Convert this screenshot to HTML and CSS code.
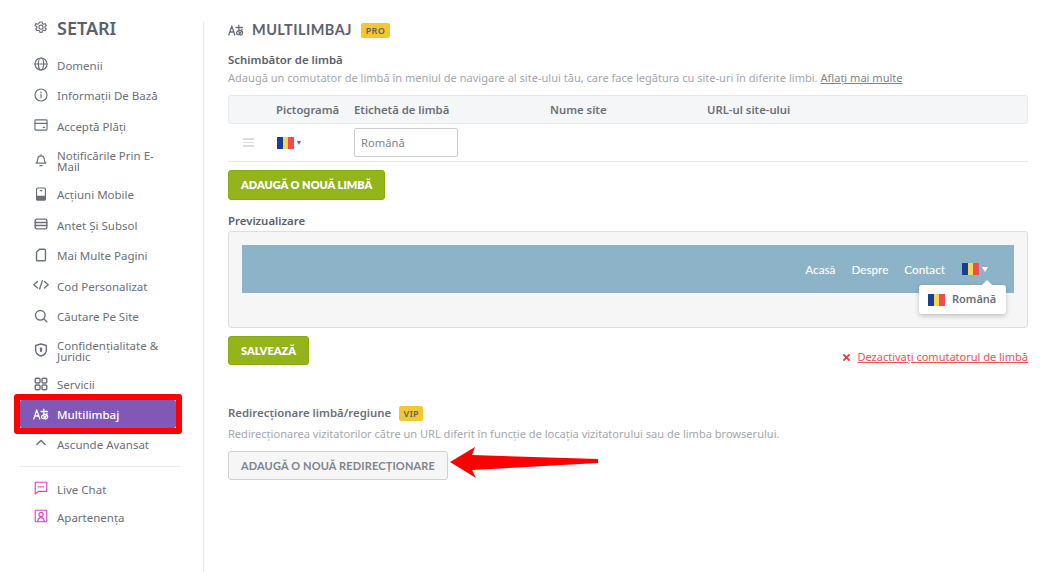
FILE: index.html
```html
<!DOCTYPE html>
<html lang="ro">
<head>
<meta charset="utf-8">
<title>Setari</title>
<link rel="stylesheet" href="styles.css">
</head>
<body>
<div class="page">
  <aside class="sidebar">
    <h2 class="side-title">
      <svg class="ico" viewBox="-1 -1 18 18"><path d="M6.800 1.200h2.400l.5 1.900 1.100.6 1.900-.6 1.200 2.100-1.400 1.300v1.200l1.400 1.300-1.200 2.100-1.900-.6-1.100.6-.5 1.900H6.800l-.5-1.900-1.100-.6-1.900.6-1.200-2.100 1.400-1.300V6.500L1.100 5.200l1.200-2.100 1.900.6 1.100-.6z"/><circle cx="8" cy="7.100" r="2.300"/></svg>
      <span>SETARI</span>
    </h2>
    <nav class="menu">
      <a class="item"><svg class="ico" viewBox="-1 -1 18 18"><circle cx="8" cy="8" r="6.800"/><ellipse cx="8" cy="8" rx="3" ry="6.800"/><path d="M1.200 8h13.600"/></svg><span>Domenii</span></a>
      <a class="item"><svg class="ico" viewBox="-1 -1 18 18"><circle cx="8" cy="8" r="6.800"/><path d="M8 7.500v3.600M8 4.600v1.200"/></svg><span>Informații De Bază</span></a>
      <a class="item"><svg class="ico" viewBox="-1 -1 18 18"><rect x="1.200" y="2.200" width="13.600" height="11.600" rx="1"/><path d="M1.200 6.200h13.600M10.400 10.600h1.800"/></svg><span>Acceptă Plăți</span></a>
      <a class="item item-double"><svg class="ico" viewBox="-1 -1 18 18"><path d="M2.500 11.600h11c-1.200-1-1.600-2-1.700-3.800C11.700 5.200 10.200 3.400 8 3.400S4.300 5.200 4.200 7.800c-.1 1.800-.5 2.800-1.700 3.800zM8 1.900v1.500M6.800 14.400h2.400"/></svg><span>Notificările Prin E-Mail</span></a>
      <a class="item"><svg class="ico" viewBox="-1 -1 18 18"><rect x="3" y="1.200" width="10" height="13.600" rx="1.500"/><path d="M3 10.600h10v3c0 .7-.5 1.200-1.200 1.200H4.200c-.7 0-1.200-.5-1.200-1.200z" fill="#6b7079"/><path d="M7 4.200h2"/></svg><span>Acțiuni Mobile</span></a>
      <a class="item"><svg class="ico ico-thick" viewBox="-1 -1 18 18"><rect x="1.500" y="2.500" width="13" height="11" rx="1.500"/><path d="M1.500 6.300h13M1.500 9.700h13"/></svg><span>Antet Și Subsol</span></a>
      <a class="item"><svg class="ico ico-thick" viewBox="-1 -1 18 18"><path d="M6.200 1.500h5.600c.7 0 1.200.5 1.200 1.200v10.600c0 .7-.5 1.200-1.200 1.200H4.200c-.7 0-1.200-.5-1.200-1.200V4.700z"/></svg><span>Mai Multe Pagini</span></a>
      <a class="item"><svg class="ico" viewBox="0 0 16 16"><path d="M4.500 4.500 .8 7.800l3.700 3.300M11.500 4.500l3.700 3.300-3.700 3.300M9.400 3.500 6.600 12"/></svg><span>Cod Personalizat</span></a>
      <a class="item"><svg class="ico ico-thick" viewBox="-1 -1 18 18"><circle cx="7.200" cy="7.200" r="5.400"/><path d="m11 11 3.600 3.600"/></svg><span>Căutare Pe Site</span></a>
      <a class="item item-double"><svg class="ico ico-thick" viewBox="-1 -1 18 18"><path d="M8 1.200 14 3v5.200c0 3.200-2.500 5.400-6 6.600-3.500-1.200-6-3.400-6-6.600V3z"/><path d="M8 6v3.200" stroke-width="2.400"/></svg><span>Confidențialitate &amp; Juridic</span></a>
      <a class="item"><svg class="ico ico-thick" viewBox="-1 -1 18 18"><rect x="1.500" y="1.500" width="5.400" height="5.400" rx="1.500"/><rect x="9.100" y="1.500" width="5.400" height="5.400" rx="1.500"/><rect x="1.500" y="9.100" width="5.400" height="5.400" rx="1.500"/><rect x="9.100" y="9.100" width="5.400" height="5.400" rx="1.500"/></svg><span>Servicii</span></a>
      <a class="item item-active"><svg class="ico" viewBox="0 0 16 16"><path d="m.8 13 3-9 3 9M1.800 10h4"/><path d="M8 5.500h6.500M10.800 3.200c-.1 4.500 0 7 .9 9.300M14 7.500c-.8 3-2.800 5-4.300 5-1.800 0-1.500-3 .8-3.900 1.800-.7 4.200 0 4.200 1.900 0 1.300-.8 2.200-2 2.700"/></svg><span>Multilimbaj</span></a>
      <a class="item"><svg class="ico" viewBox="0 0 16 16"><path d="m3.800 9.500 4.200-4 4.200 4" stroke-width="1.500"/></svg><span>Ascunde Avansat</span></a>
    </nav>
    <hr class="side-rule">
    <nav class="menu menu-extra">
      <a class="item item-pink"><svg class="ico" viewBox="-1 -1 18 18"><path d="M1.500 1.500h13v10.300H5L1.500 14.800z"/><path d="M5 6.700h1M7.500 6.700h1M10 6.700h1" stroke-width="1.600"/></svg><span>Live Chat</span></a>
      <a class="item item-pink"><svg class="ico" viewBox="-1 -1 18 18"><rect x="1.500" y="1.500" width="13" height="13" rx="1"/><circle cx="8" cy="6.300" r="2.400"/><path d="M4.300 14.500c0-3 1.500-4.600 3.700-4.600s3.700 1.600 3.700 4.600"/></svg><span>Apartenența</span></a>
    </nav>
  </aside>

  <main class="content">
    <header class="page-head">
      <svg class="ico ico-head" viewBox="0 0 16 16"><path d="m.8 13 3-9 3 9M1.800 10h4"/><path d="M8 5.500h6.500M10.800 3.200c-.1 4.500 0 7 .9 9.300M14 7.500c-.8 3-2.800 5-4.300 5-1.800 0-1.500-3 .8-3.900 1.800-.7 4.200 0 4.200 1.900 0 1.300-.8 2.200-2 2.700"/></svg>
      <h1 class="page-title">MULTILIMBAJ</h1>
      <span class="badge">PRO</span>
    </header>

    <h3 class="label label-first">Schimbător de limbă</h3>
    <p class="desc">Adaugă un comutator de limbă în meniul de navigare al site-ului tău, care face legătura cu site-uri în diferite limbi. <a class="desc-link">Aflați mai multe</a></p>

    <div class="table-head">
      <span></span><span>Pictogramă</span><span>Etichetă de limbă</span><span>Nume site</span><span>URL-ul site-ului</span>
    </div>
    <div class="table-row">
      <span class="drag"><i></i><i></i><i></i></span>
      <span class="flag-cell flag-cell-table"><span class="flag"><i class="blue"></i><i class="yellow"></i><i class="red"></i></span><span class="caret"></span></span>
      <span><span class="input">Română</span></span>
    </div>

    <button class="btn btn-green btn-add">ADAUGĂ O NOUĂ LIMBĂ</button>

    <h3 class="label label-preview">Previzualizare</h3>
    <div class="preview">
      <div class="preview-bar">
        <span>Acasă</span><span>Despre</span><span>Contact</span>
        <span class="flag-cell flag-cell-nav"><span class="flag"><i class="blue"></i><i class="yellow"></i><i class="red"></i></span><span class="caret caret-white"></span></span>
      </div>
      <div class="dropdown"><span class="flag"><i class="blue"></i><i class="yellow"></i><i class="red"></i></span><b>Română</b></div>
    </div>

    <div class="save-row">
      <button class="btn btn-green btn-save">SALVEAZĂ</button>
      <a class="disable"><svg class="x" viewBox="0 0 10 10"><path d="m1.500 1.500 7 7M8.500 1.500l-7 7"/></svg><span>Dezactivați comutatorul de limbă</span></a>
    </div>

    <div class="redirect-head">
      <h3 class="label label-inline">Redirecționare limbă/regiune</h3>
      <span class="badge badge-small">VIP</span>
    </div>
    <p class="desc desc-redirect">Redirecționarea vizitatorilor către un URL diferit în funcție de locația vizitatorului sau de limba browserului.</p>
    <div class="redirect-action">
      <button class="btn btn-grey">ADAUGĂ O NOUĂ REDIRECȚIONARE</button>
      <svg class="arrow" viewBox="0 0 150 31"><path d="M1 15 26 0l-3 8 126 4v4L23 23l4 8z"/></svg>
    </div>
  </main>
</div>
</body>
</html>
```
FILE: styles.css
```css
* { box-sizing: border-box; }
html, body { margin: 0; padding: 0; background: #fff; }
body { font-family: "Noto Sans", sans-serif; color: #6b7079; }
.page { display: flex; align-items: flex-start; width: 1053px; height: 572px; overflow: hidden; }

.sidebar { width: 204px; height: 550px; margin-top: 22px; padding-left: 33px; border-right: 1px solid #e8e9eb; flex: none; }
.ico { width: 16px; height: 16px; fill: none; stroke: #6b7079; stroke-width: 1.300; stroke-linecap: round; stroke-linejoin: round; flex: none; }
.ico-thick { stroke-width: 1.600; }
.side-title { display: flex; align-items: center; gap: 8px; margin: -5px 0 11.270px; height: 22px; font: 600 18px/22px "Noto Sans", sans-serif; color: #5c616b; }
.menu { width: 139px; }
.item { display: flex; align-items: center; gap: 8px; min-height: 30.450px; font-size: 11.500px; line-height: 11px; color: #6b7079; }
.item .ico { margin-bottom: 2px; }
.item-double { min-height: 38px; }
.item-active { position: relative; width: 156px; min-height: 28px; margin: 0 0 1px -13px; padding: 1px 0 0 13px; background: #8258b7; border-radius: 2px; color: #fff; font-weight: 500; }
.item-active::after { content: ""; position: absolute; inset: -6px; border: 6px solid #ff0000; border-radius: 3px; }
.item-active .ico { stroke: #fff; }
.side-rule { width: 160px; height: 1px; margin: 6px 0 8.700px -13px; border: 0; background: #e8e9eb; }
.menu-extra .item { min-height: 28px; }
.item-pink .ico { stroke: #d946c8; }

.content { width: 800px; margin-left: 24px; padding-top: 21px; position: relative; }
.page-head { display: flex; align-items: center; height: 18px; }
.ico-head { margin-right: 8px; stroke: #6b7079; }
.page-title { margin: 0 9px 0 0; font: 700 14.500px/18px Lato, sans-serif; letter-spacing: .45px; color: #5c616b; }
.badge { display: inline-block; width: 29px; height: 15px; background: #f5c631; border-radius: 2px; font: 600 9px/15px "Noto Sans", sans-serif; letter-spacing: .3px; text-align: center; color: #5c616b; }
.badge-small { width: 24px; }

.label { margin: 0; font: 600 11.400px/14px "Noto Sans", sans-serif; color: #5c616b; }
.label-first { margin-top: 14px; }
.desc { margin: 4px 0 0; font-size: 11.050px; line-height: 14px; color: #a3a7ad; }
.desc-link { color: #80858c; text-decoration: underline; }

.table-head, .table-row { display: grid; align-items: center; }
.table-head { grid-template-columns: 47px 78px 196px 157px 1fr; height: 29px; margin-top: 10px; background: #f5f6f8; border: 1px solid #e6e8eb; border-radius: 3px; font-weight: 600; font-size: 11.300px; color: #6b7079; }
.table-row { grid-template-columns: 48px 78px 196px 157px 1fr; height: 38px; border-bottom: 1px solid #e6e8eb; }
.drag { display: flex; flex-direction: column; gap: 2px; width: 11px; margin-left: 15px; }
.drag i { display: block; height: 1.500px; background: #dadce0; }
.flag-cell { display: flex; align-items: center; gap: 3px; }
.flag-cell-table { margin-left: 1px; }
.flag { display: flex; width: 17px; height: 12px; flex: none; }
.flag i { flex: 1; }
.blue { background: #1c3f94; }
.yellow { background: #f5d858; }
.red { background: #f04b55; }
.caret { width: 0; height: 0; border-left: 2.500px solid transparent; border-right: 2.500px solid transparent; border-top: 4px solid #6b7079; }
.caret-white { border-left-width: 3px; border-right-width: 3px; border-top: 5px solid #fff; }
.input { display: block; width: 104px; height: 29px; padding-left: 6px; border: 1px solid #c9ccd1; border-radius: 2px; font-size: 11.200px; line-height: 27px; color: #80858c; }

.btn { display: block; height: 30px; border: 0; border-radius: 3px; font: 800 11px/30px Lato, sans-serif; padding: 0 12px; }
.btn-green { background: #93b41a; color: #fff; border: 1px solid #8aaa14; line-height: 28px; }
.btn-add { margin-top: 8px; }
.btn-save { height: 29px; line-height: 27px; }
.label-preview { margin-top: 14px; }
.preview { position: relative; height: 97px; margin-top: 3px; padding: 13px; background: #f6f6f6; border: 1px solid #dedede; border-radius: 3px; }
.preview-bar { display: flex; align-items: center; justify-content: flex-end; gap: 16px; height: 48px; padding-right: 26px; background: #8db3c8; font: 500 11.700px/14px Lato, sans-serif; color: #fff; }
.flag-cell-nav { margin-left: 1px; }
.dropdown { position: absolute; left: 690px; top: 53px; display: flex; align-items: center; gap: 7px; width: 87px; height: 29px; padding: 0 0 2px 9px; background: #fff; border-radius: 3px; box-shadow: 0 2px 5px rgba(0,0,0,.22); font-size: 11px; color: #6b7079; }
.dropdown b { font-weight: 600; }
.dropdown .flag { margin-top: 2px; }
.dropdown::before { content: ""; position: absolute; left: 63px; top: -5px; border-left: 5px solid transparent; border-right: 5px solid transparent; border-bottom: 5px solid #fff; }

.save-row { display: flex; justify-content: space-between; align-items: flex-end; margin-top: 8px; }
.disable { display: flex; align-items: center; gap: 6px; margin-bottom: 1px; font-size: 11px; line-height: 14px; color: #f0505a; }
.disable span { text-decoration: underline; }
.x { width: 9px; height: 9px; fill: none; stroke: #e63c46; stroke-width: 2; }

.redirect-head { display: flex; align-items: center; gap: 8px; margin-top: 40px; height: 16px; }
.label-inline { color: #6b7079; }
.desc-redirect { margin-top: 6px; }
.redirect-action { display: flex; align-items: center; margin-top: 10px; position: relative; }
.btn-grey { width: 220px; height: 29px; padding: 0; background: #f6f6f6; color: #80858c; border: 1px solid #cfd0d2; line-height: 27px; font-weight: 700; letter-spacing: .15px; text-align: center; }
.arrow { position: absolute; left: 221px; top: -4px; width: 150px; height: 31px; fill: #ff0000; }
```
